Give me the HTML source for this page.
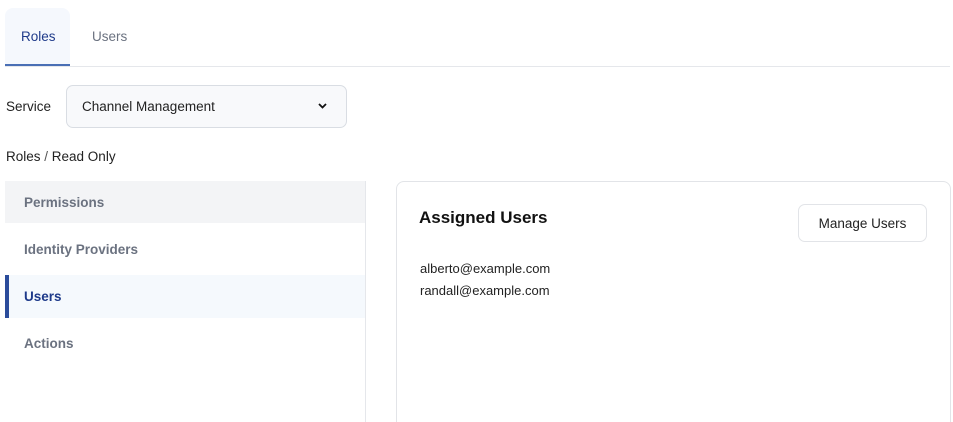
<!DOCTYPE html>
<html style="overflow:hidden;height:422px"><head><style>
*{box-sizing:border-box;margin:0;padding:0}
body{width:953px;height:422px;overflow:hidden;background:#fff;font-family:"Liberation Sans",sans-serif;position:relative;color:#111}
.abs{position:absolute}
</style></head><body>
<div class="abs" style="left:5px;top:8px;width:65px;height:58px;background:#f5f8fd;border-radius:8px 8px 0 0;border-bottom:2px solid #4a6fb5"></div>
<div class="abs" style="left:5px;top:66px;width:945px;height:1px;background:#e5e7eb"></div>
<div class="abs" style="left:21px;top:29px;font-size:13.5px;color:#1e3a8a">Roles</div>
<div class="abs" style="left:92px;top:29px;font-size:13.5px;color:#6b7280">Users</div>
<div class="abs" style="left:6px;top:99px;font-size:13.5px;color:#222">Service</div>
<div class="abs" style="left:66px;top:85px;width:281px;height:43px;background:#f8f9fb;border:1px solid #d9dde3;border-radius:7px"></div>
<div class="abs" style="left:82px;top:99px;font-size:13.5px;color:#222">Channel Management</div>
<svg class="abs" style="left:317px;top:102px" width="11" height="8" viewBox="0 0 11 8"><path d="M2 2l3.5 3.5L9 2" fill="none" stroke="#111" stroke-width="1.8"/></svg>
<div class="abs" style="left:6px;top:149px;font-size:13.5px;color:#222">Roles <span style="color:#555">/</span> Read Only</div>
<div class="abs" style="left:365px;top:181px;width:1px;height:241px;background:#e5e7eb"></div>
<div class="abs" style="left:5px;top:181px;width:360px;height:42px;background:#f3f4f6"></div>
<div class="abs" style="left:5px;top:275px;width:360px;height:43px;background:#f5f9fd;border-left:4px solid #2b4c9b"></div>
<div class="abs" style="left:24px;top:195px;font-size:13.5px;font-weight:bold;color:#6b7280">Permissions</div>
<div class="abs" style="left:24px;top:242px;font-size:13.5px;font-weight:bold;color:#6b7280">Identity Providers</div>
<div class="abs" style="left:24px;top:289px;font-size:13.5px;font-weight:bold;color:#1e3a8a">Users</div>
<div class="abs" style="left:24px;top:336px;font-size:13.5px;font-weight:bold;color:#6b7280">Actions</div>
<div class="abs" style="left:396px;top:181px;width:555px;height:250px;border:1px solid #e2e4e8;border-radius:8px"></div>
<div class="abs" style="left:419px;top:208px;font-size:17px;font-weight:bold;color:#111">Assigned Users</div>
<div class="abs" style="left:798px;top:204px;width:129px;height:38px;border:1px solid #e2e4e8;border-radius:7px;font-size:13.5px;text-align:center;line-height:38px;color:#222">Manage Users</div>
<div class="abs" style="left:420px;top:261px;font-size:13px;color:#222">alberto@example.com</div>
<div class="abs" style="left:420px;top:283px;font-size:13px;color:#222">randall@example.com</div>
</body></html>
